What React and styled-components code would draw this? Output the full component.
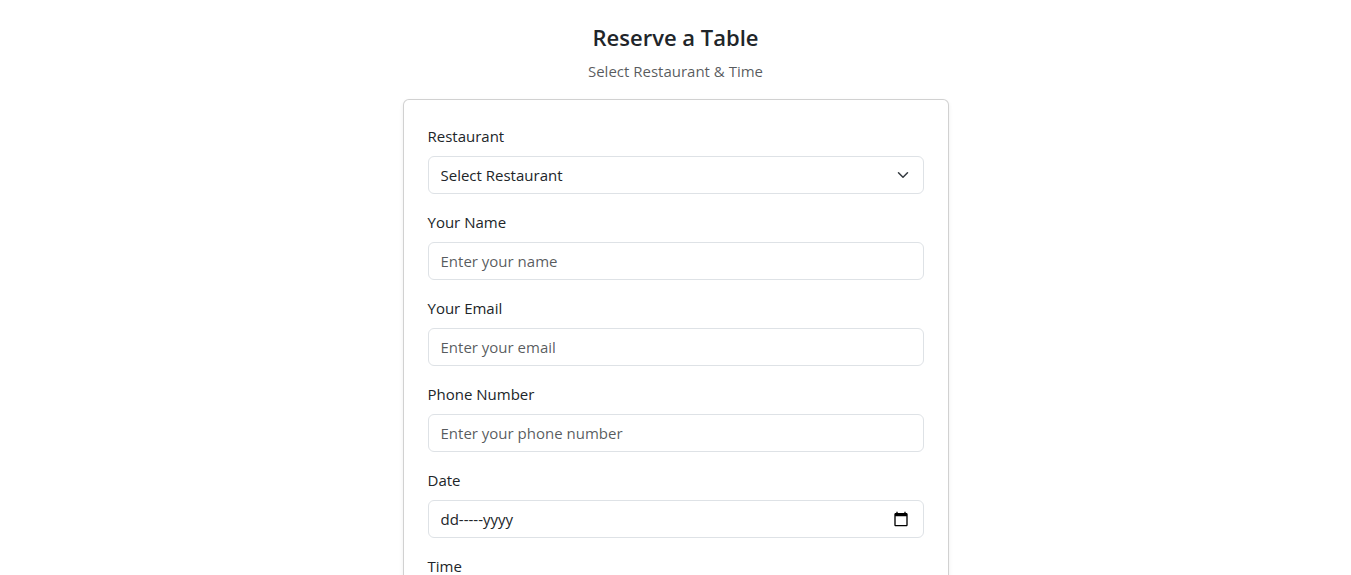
import React from "react";
import styled, { createGlobalStyle, css } from "styled-components";

const GlobalStyle = createGlobalStyle`
  *, *::before, *::after { box-sizing: border-box; }
  html { scrollbar-width: none; }
  body {
    margin: 0;
    background: #fff;
    color: #212529;
    font-family: "Segoe UI", "Open Sans", "Noto Sans", sans-serif;
    font-size: 15px;
    line-height: 24px;
  }
`;

const Page = styled.main`
  width: 100%;
  max-width: 1140px;
  margin: 0 auto;
  padding: 23px 12px 48px;
`;

const Header = styled.header`
  text-align: center;
  margin-bottom: 16px;
`;

const Title = styled.h1`
  margin: 0 0 8px;
  font-size: 22px;
  font-weight: 600;
  line-height: 28px;
`;

const Subtitle = styled.p`
  margin: 0;
  color: rgba(33, 37, 41, 0.75);
`;

const Card = styled.form`
  width: 100%;
  max-width: 546px;
  margin: 0 auto;
  padding: 24px;
  display: flex;
  flex-direction: column;
  gap: 16px;
  background: #fff;
  border: 1px solid rgba(0, 0, 0, 0.18);
  border-radius: 6px;
  box-shadow: 0 2px 4px rgba(0, 0, 0, 0.075);
`;

const Field = styled.div`
  display: flex;
  flex-direction: column;
  gap: 8px;
`;

const Label = styled.label`
  align-self: flex-start;
`;

const controlStyle = css`
  width: 100%;
  height: 38px;
  margin: 0;
  padding: 6px 12px;
  border: 1px solid #dee2e6;
  border-radius: 6px;
  background: #fff;
  color: #212529;
  font: inherit;
  outline: none;
  appearance: none;

  &:focus {
    border-color: #86b7fe;
    box-shadow: 0 0 0 4px rgba(13, 110, 253, 0.25);
  }
`;

const Input = styled.input`
  ${controlStyle}

  &::placeholder {
    color: ${(p) => (p.$strong ? "#212529" : "rgba(33, 37, 41, 0.75)")};
    opacity: 1;
  }
`;

const Select = styled.select`
  ${controlStyle}
  padding-right: 36px;
`;

const ControlWrap = styled.div`
  display: flex;
  position: relative;
`;

const Chevron = styled.svg`
  position: absolute;
  top: 11px;
  right: 13px;
  pointer-events: none;
`;

const PickerButton = styled.button`
  position: absolute;
  top: 9px;
  right: 13px;
  width: 20px;
  height: 20px;
  padding: 0;
  display: grid;
  place-items: center;
  border: 0;
  background: none;
  color: #000;
  cursor: pointer;
`;

function TextField({ id, label, type = "text", placeholder }) {
  return (
    <Field>
      <Label htmlFor={id}>{label}</Label>
      <Input id={id} name={id} type={type} placeholder={placeholder} />
    </Field>
  );
}

export default function App() {
  return (
    <>
      <GlobalStyle />
      <Page>
        <Header>
          <Title>Reserve a Table</Title>
          <Subtitle>Select Restaurant &amp; Time</Subtitle>
        </Header>
        <Card onSubmit={(e) => e.preventDefault()}>
          <Field>
            <Label htmlFor="restaurant">Restaurant</Label>
            <ControlWrap>
              <Select id="restaurant" name="restaurant" defaultValue="">
                <option value="">Select Restaurant</option>
              </Select>
              <Chevron width="16" height="16" viewBox="0 0 16 16" aria-hidden="true">
                <path
                  d="m3.500 5.750 4.500 4.500 4.500-4.500"
                  fill="none"
                  stroke="#343a40"
                  strokeWidth="1.5"
                  strokeLinecap="round"
                  strokeLinejoin="round"
                />
              </Chevron>
            </ControlWrap>
          </Field>
          <TextField id="name" label="Your Name" placeholder="Enter your name" />
          <TextField id="email" label="Your Email" type="email" placeholder="Enter your email" />
          <TextField id="phone" label="Phone Number" type="tel" placeholder="Enter your phone number" />
          <Field>
            <Label htmlFor="date">Date</Label>
            <ControlWrap>
              <Input id="date" name="date" type="text" placeholder="dd-----yyyy" $strong />
              <PickerButton type="button" aria-label="Open calendar">
                <svg width="16" height="16" viewBox="0 0 24 24" aria-hidden="true">
                  <path
                    fill="currentColor"
                    d="M20 3h-1V1h-2v2H7V1H5v2H4c-1.1 0-2 .9-2 2v16c0 1.1.9 2 2 2h16c1.1 0 2-.9 2-2V5c0-1.1-.9-2-2-2zm0 18H4V8h16v13z"
                  />
                </svg>
              </PickerButton>
            </ControlWrap>
          </Field>
          <TextField id="time" label="Time" />
        </Card>
      </Page>
    </>
  );
}
